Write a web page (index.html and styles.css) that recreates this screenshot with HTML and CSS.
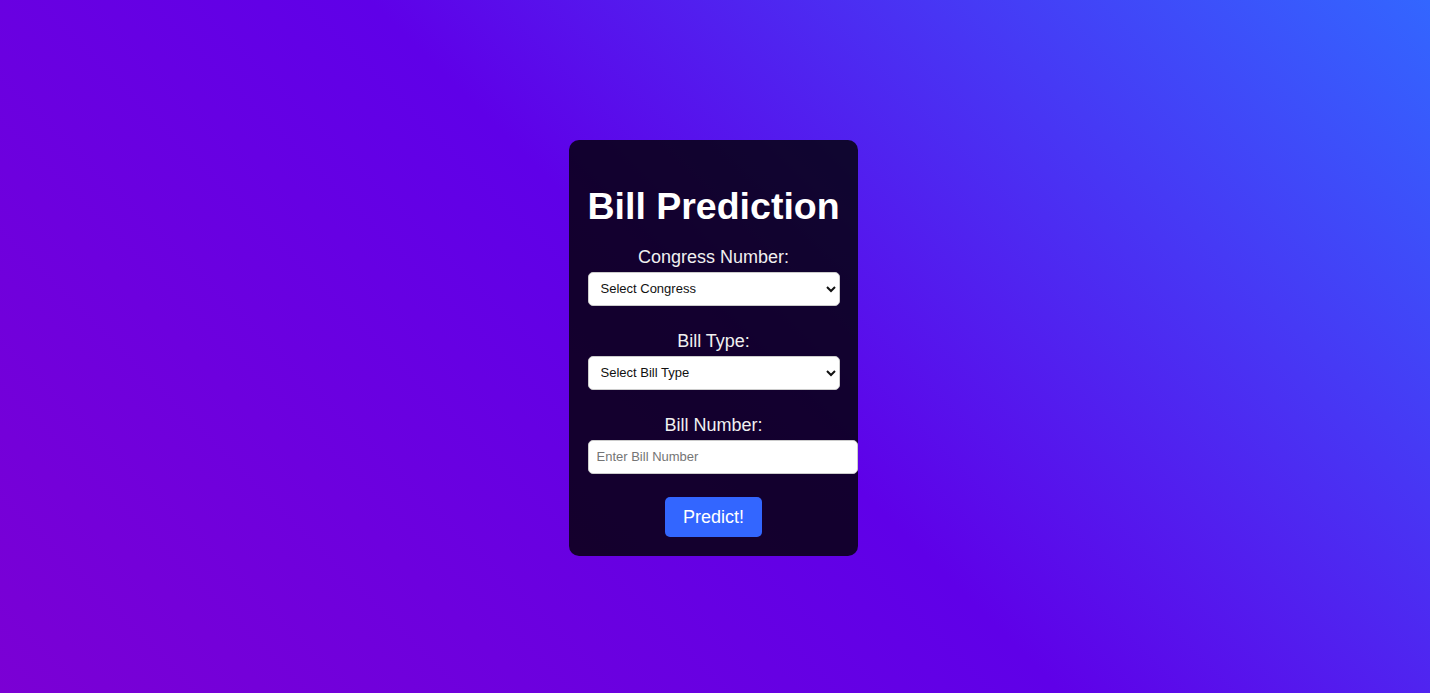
FILE: index.html
```html
<!DOCTYPE html>
<html lang="en">
<head>
<meta charset="utf-8">
<title>Bill Prediction</title>
<link rel="stylesheet" href="styles.css">
</head>
<body>
<div class="card">
  <h1 class="title">Bill Prediction</h1>
  <form class="form">
    <label class="label" for="congress">Congress Number:</label>
    <select class="control select" id="congress">
      <option>Select Congress</option>
    </select>
    <label class="label" for="type">Bill Type:</label>
    <select class="control select" id="type">
      <option>Select Bill Type</option>
    </select>
    <label class="label" for="num">Bill Number:</label>
    <input class="control input" id="num" type="text" placeholder="Enter Bill Number">
    <button class="btn" type="button">Predict!</button>
  </form>
</div>
</body>
</html>
```

FILE: styles.css
```css
html, body {
  margin: 0;
  padding: 0;
  height: 100%;
}
body {
  font-family: "Liberation Sans", Arial, sans-serif;
  background: linear-gradient(45deg, #7b00d4 0%, #5f00e8 50%, #3366ff 100%);
  display: flex;
  align-items: center;
  justify-content: center;
  height: 693px;
  overflow: hidden;
}
.card {
  width: 252px;
  padding: 20px 18px 19px 19px;
  margin: 2px 4px 0 0;
  background: rgba(0, 0, 0, 0.8);
  border-radius: 10px;
  text-align: center;
  color: #fff;
}
.title {
  margin: 25px 0 19px;
  font-size: 37.5px;
  font-weight: bold;
  line-height: 43px;
  white-space: nowrap;
}
.form {
  display: flex;
  flex-direction: column;
  align-items: flex-start;
}
.label {
  align-self: stretch;
  font-size: 18px;
  line-height: 21px;
  color: #f0f0f0;
  margin-bottom: 4px;
}
.control {
  font-family: "Liberation Sans", Arial, sans-serif;
  font-size: 13px;
  border: 1px solid #ccc;
  border-radius: 5px;
  background: #fff;
  color: #111;
  margin: 0 0 25px;
}
.select {
  width: 252px;
  height: 34px;
  box-sizing: border-box;
  padding: 0 8px 0 8px;
}
.input {
  width: 252px;
  height: 16px;
  padding: 8px 8px;
  line-height: 16px;
  margin-bottom: 23px;
}
.input::placeholder {
  color: #757575;
}
.btn {
  align-self: center;
  font-family: "Liberation Sans", Arial, sans-serif;
  font-size: 18px;
  line-height: 21px;
  padding: 10px 18px 9px;
  border: none;
  border-radius: 5px;
  background: #3366ff;
  color: #fff;
}
```
